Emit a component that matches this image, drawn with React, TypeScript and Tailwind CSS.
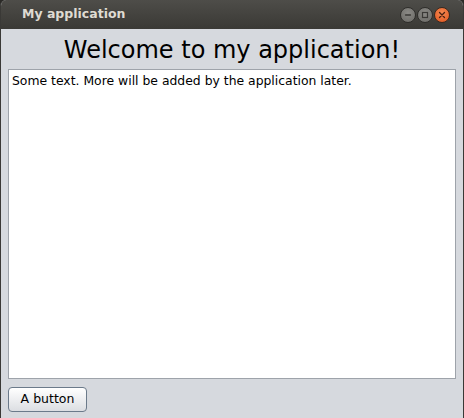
import * as React from "react";

const WindowButton = ({ kind }: { kind: "min" | "max" | "close" }) => {
  if (kind === "close") {
    return (
      <div className="flex h-[16px] w-[16px] items-center justify-center rounded-full border border-[#3a2a20] bg-[radial-gradient(circle_at_50%_35%,#f58a53,#e0541d)]">
        <svg width="8" height="8" viewBox="0 0 8 8">
          <path d="M1.5 1.5 L6.5 6.5 M6.5 1.5 L1.5 6.5" stroke="#4a2010" strokeWidth="1.3" strokeLinecap="round" />
        </svg>
      </div>
    );
  }
  return (
    <div className="flex h-[16px] w-[16px] items-center justify-center rounded-full border border-[#2f2e2b] bg-[radial-gradient(circle_at_50%_35%,#8a8985,#6a6965)]">
      {kind === "min" ? (
        <svg width="8" height="8" viewBox="0 0 8 8">
          <path d="M1.5 4 L6.5 4" stroke="#3a3936" strokeWidth="1.3" strokeLinecap="round" />
        </svg>
      ) : (
        <svg width="8" height="8" viewBox="0 0 8 8">
          <rect x="1.5" y="1.5" width="5" height="5" fill="none" stroke="#3a3936" strokeWidth="1.2" />
        </svg>
      )}
    </div>
  );
};

export default function App() {
  return (
    <div className="h-[418px] w-[464px] overflow-hidden bg-[#2b2a27] font-['DejaVu_Sans',sans-serif]">
      <div className="flex h-full flex-col overflow-hidden rounded-t-[6px] border-x border-[#3a3936] bg-[#d6d9de]">
        {/* title bar */}
        <div className="flex h-[29px] shrink-0 items-center justify-between bg-gradient-to-b from-[#4e4d49] to-[#3a3935] pl-[21px] pr-[13px]">
          <span className="text-[12.5px] font-bold text-[#dfdbd2]">My application</span>
          <div className="flex items-center gap-[1px]">
            <WindowButton kind="min" />
            <WindowButton kind="max" />
            <WindowButton kind="close" />
          </div>
        </div>

        {/* content */}
        <div className="flex flex-1 flex-col px-[7px]">
          <h1 className="pt-[2px] text-center text-[24px] leading-[38px] text-black">Welcome to my application!</h1>
          <div className="h-[310px] border border-[#9ea3aa] bg-white px-[3px] py-[2px]">
            <p className="text-[12.4px] leading-[17px] text-black">Some text. More will be added by the application later.</p>
          </div>
          <div className="pt-[7px]">
            <button className="h-[25px] w-[79px] rounded-[4px] border border-[#6b7a8a] bg-gradient-to-b from-white to-[#dcdee2] text-[12.5px] text-black shadow-[inset_0_1px_0_#ffffff]">
              A button
            </button>
          </div>
        </div>
      </div>
    </div>
  );
}
